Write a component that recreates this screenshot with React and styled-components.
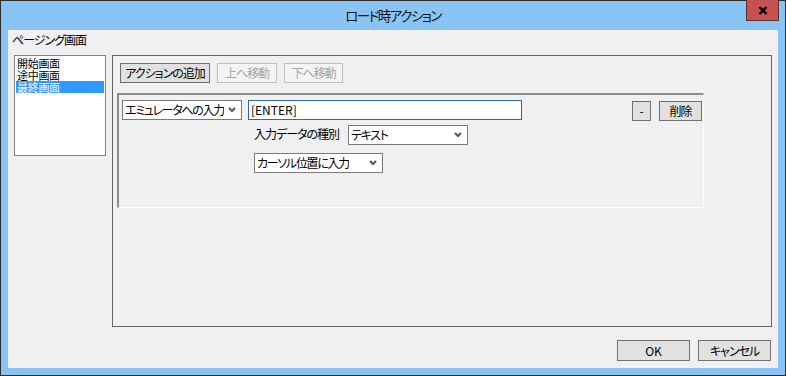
import React from "react";
import styled, { createGlobalStyle } from "styled-components";

const GlobalStyle = createGlobalStyle`
  html, body {
    margin: 0;
    padding: 0;
    background: #ffffff;
  }
  body {
    font-family: "Noto Sans CJK JP", "Noto Sans", sans-serif;
    font-feature-settings: "palt";
    letter-spacing: -1px;
    color: #000;
  }
  * {
    box-sizing: border-box;
  }
`;

const Window = styled.div`
  width: 786px;
  height: 376px;
  border: 1px solid #2b2b2b;
  background: #8ac4f5;
  padding: 0 7px 7px;
  display: flex;
  flex-direction: column;
`;

const TitleBar = styled.div`
  height: 29px;
  display: grid;
  grid-template-columns: 1fr auto 1fr;
  align-items: start;
`;

const Title = styled.div`
  grid-column: 2;
  font-size: 13.5px;
  letter-spacing: -1.5px;
  line-height: 28px;
  color: #111;
  white-space: nowrap;
`;

const CloseButton = styled.div`
  grid-column: 3;
  justify-self: end;
  width: 33px;
  height: 21px;
  margin-top: -1px;
  margin-right: -1px;
  background: #c75050;
  border: 1px solid #5b3030;
  border-top: none;
  display: flex;
  align-items: center;
  justify-content: center;
`;

const Client = styled.div`
  flex: 1;
  background: #f0f0f0;
  padding: 3px 6px 0 4px;
  display: flex;
  flex-direction: column;
`;

const GroupLabel = styled.div`
  height: 22px;
  font-size: 12px;
  line-height: 14px;
`;

const MainRow = styled.div`
  display: flex;
  align-items: flex-start;
  gap: 6px;
  padding-left: 2px;
`;

const ListBox = styled.div`
  width: 92px;
  height: 101px;
  border: 1px solid #828282;
  background: #fff;
  padding: 1px;
  font-size: 11px;
  letter-spacing: -0.3px;
  line-height: 12px;
`;

const ListItem = styled.div`
  height: 12px;
  padding-left: 1px;
  white-space: nowrap;
  background: ${(p) => (p.$selected ? "#3399ff" : "transparent")};
  color: ${(p) => (p.$selected ? "#fff" : "#000")};
`;

const GroupPanel = styled.div`
  width: 660px;
  height: 272px;
  border: 1px solid #646464;
  padding: 7px 0 0 4px;
`;

const Toolbar = styled.div`
  display: flex;
  gap: 7px;
  padding-left: 3px;
`;

const Button = styled.div`
  width: ${(p) => p.$w}px;
  height: ${(p) => p.$h || 20}px;
  margin-top: ${(p) => p.$mt || 0}px;
  border: 1px solid ${(p) => (p.$disabled ? "#bfbfbf" : "#707070")};
  background: ${(p) => (p.$disabled ? "#f4f4f4" : "#e1e1e1")};
  color: ${(p) => (p.$disabled ? "#a3a3a3" : "#000")};
  font-size: 12px;
  line-height: 16px;
  letter-spacing: ${(p) => (p.$latin ? "0" : "-1px")};
  display: flex;
  align-items: center;
  justify-content: center;
  white-space: nowrap;
`;

const ActionPanel = styled.div`
  margin-top: 10px;
  width: 587px;
  height: 115px;
  border-style: solid;
  border-width: 2px 1px 1px 2px;
  border-color: #8c8c8c #ffffff #ffffff #8c8c8c;
  padding: 5px 1px 0 3px;
`;

const ActionRow = styled.div`
  display: flex;
  align-items: flex-start;
  gap: 6px;
`;

const Field = styled.div`
  width: ${(p) => p.$w}px;
  height: 20px;
  border: 1px solid ${(p) => (p.$focus ? "#2f6a9a" : "#7a7a7a")};
  background: #fff;
  font-size: 12px;
  line-height: 18px;
  letter-spacing: ${(p) => (p.$focus ? "0" : "-1.3px")};
  padding: 0 5px 0 2px;
  display: flex;
  align-items: center;
  justify-content: space-between;
  white-space: nowrap;
  overflow: hidden;

  span {
    overflow: hidden;
  }
  svg {
    flex-shrink: 0;
    margin-left: 4px;
  }
`;

const MiddleColumn = styled.div`
  display: flex;
  flex-direction: column;
`;

const SubRow = styled.div`
  display: flex;
  align-items: flex-start;
  padding-left: 6px;
  margin-top: ${(p) => p.$mt}px;
`;

const FieldLabel = styled.div`
  width: 94px;
  font-size: 12px;
  line-height: 16px;
  padding-top: 1px;
  white-space: nowrap;
`;

const RowButtons = styled.div`
  margin-left: auto;
  display: flex;
  gap: 8px;
`;

const Footer = styled.div`
  margin-top: 13px;
  display: flex;
  justify-content: flex-end;
  gap: 8px;
  padding-right: 1px;
`;

function Chevron() {
  return (
    <svg width="8" height="6" viewBox="0 0 8 6">
      <path d="M1 1 L4 4 L7 1" fill="none" stroke="#5a5a5a" strokeWidth="2.2" />
    </svg>
  );
}

function Dropdown({ w, children }) {
  return (
    <Field $w={w}>
      <span>{children}</span>
      <Chevron />
    </Field>
  );
}

export default function App() {
  return (
    <>
      <GlobalStyle />
      <Window>
        <TitleBar>
          <Title>ロード時アクション</Title>
          <CloseButton>
            <svg width="10" height="9" viewBox="0 0 10 9">
              <path d="M1.5 1 L8.5 8 M8.5 1 L1.5 8" stroke="#000" strokeWidth="2.4" />
            </svg>
          </CloseButton>
        </TitleBar>
        <Client>
          <GroupLabel>ページング画面</GroupLabel>
          <MainRow>
            <ListBox>
              <ListItem>開始画面</ListItem>
              <ListItem>途中画面</ListItem>
              <ListItem $selected>最終画面</ListItem>
            </ListBox>
            <GroupPanel>
              <Toolbar>
                <Button $w={90}>アクションの追加</Button>
                <Button $w={60} $disabled>上へ移動</Button>
                <Button $w={59} $disabled>下へ移動</Button>
              </Toolbar>
              <ActionPanel>
                <ActionRow>
                  <Dropdown w={120}>エミュレータへの入力</Dropdown>
                  <MiddleColumn>
                    <Field $w={274} $focus>[ENTER]</Field>
                    <SubRow $mt={5}>
                      <FieldLabel>入力データの種別</FieldLabel>
                      <Dropdown w={120}>テキスト</Dropdown>
                    </SubRow>
                    <SubRow $mt={8}>
                      <Dropdown w={129}>カーソル位置に入力</Dropdown>
                    </SubRow>
                  </MiddleColumn>
                  <RowButtons>
                    <Button $w={19} $mt={1} $latin>-</Button>
                    <Button $w={43} $mt={1}>削除</Button>
                  </RowButtons>
                </ActionRow>
              </ActionPanel>
            </GroupPanel>
          </MainRow>
          <Footer>
            <Button $w={73} $h={21} $latin>OK</Button>
            <Button $w={73} $h={21}>キャンセル</Button>
          </Footer>
        </Client>
      </Window>
    </>
  );
}
